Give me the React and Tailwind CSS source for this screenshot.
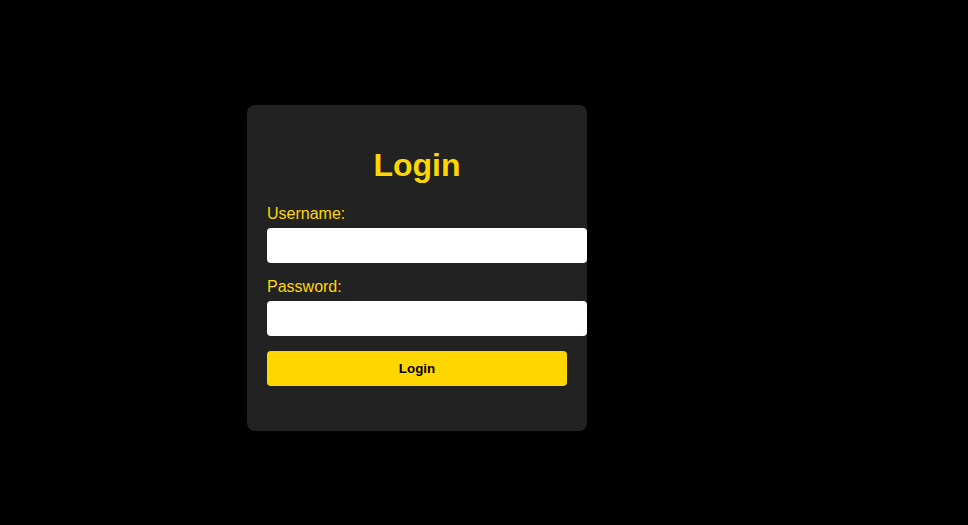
export default function App() {
  return (
    <div className="min-h-[525px] w-full bg-black pl-[247px] pt-[105px]" style={{ fontFamily: '"Liberation Sans", Arial, sans-serif' }}>
      <div className="w-[340px] h-[326px] rounded-[8px] bg-[#222222] px-[20px] pt-[20px]">
        <h1 className="mt-[22px] mb-[21px] text-center text-[32px] leading-[37px] font-bold text-[#FFD700]">Login</h1>
        <label className="block text-[16px] leading-[18px] text-[#FFD700] mb-[5px]">Username:</label>
        <input type="text" className="block w-[320px] h-[35px] rounded-[4px] bg-white border-0 outline-none mb-[15px]" />
        <label className="block text-[16px] leading-[18px] text-[#FFD700] mb-[5px]">Password:</label>
        <input type="password" className="block w-[320px] h-[35px] rounded-[4px] bg-white border-0 outline-none" />
        <button className="mt-[15px] w-[300px] h-[35px] rounded-[4px] bg-[#FFD700] text-black text-[13.33px] font-bold">Login</button>
      </div>
    </div>
  );
}
